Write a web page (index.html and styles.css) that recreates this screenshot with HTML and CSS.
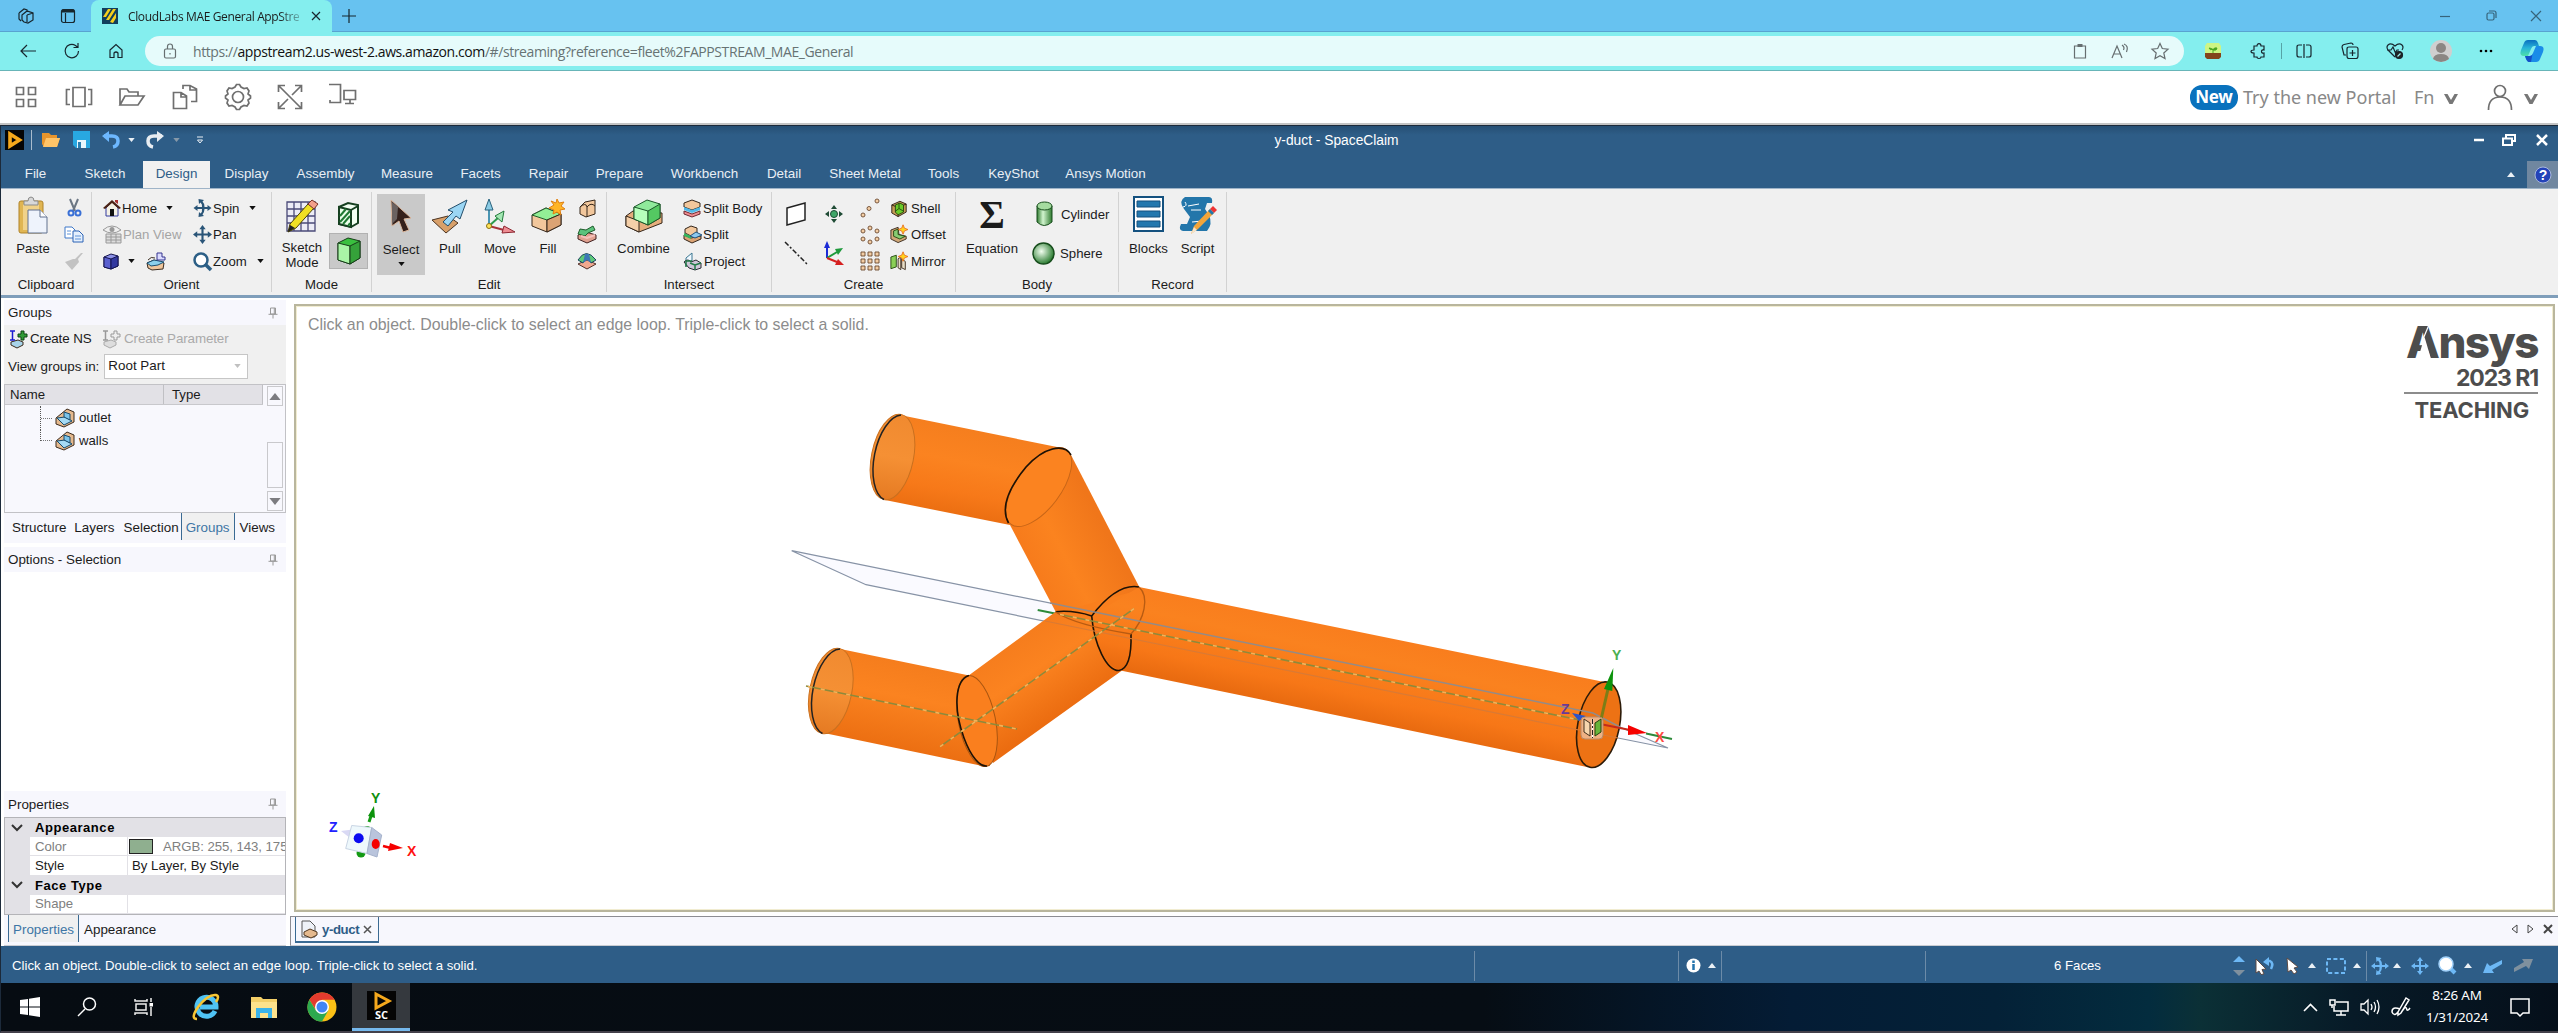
FILE: index.html
```html
<!DOCTYPE html>
<html lang="en">
<head>
<meta charset="utf-8">
<title>CloudLabs MAE General AppStream</title>
<link rel="stylesheet" href="styles.css">
</head>
<body>
<svg class="defs" aria-hidden="true">
  <defs>
    <symbol id="down" viewBox="0 0 8 5"><path d="M0 0H8L4 5Z" fill="currentColor"/></symbol>
    <symbol id="up" viewBox="0 0 8 5"><path d="M0 5H8L4 0Z" fill="currentColor"/></symbol>
    <symbol id="chev" viewBox="0 0 16 12"><path d="M1 1H4.500L8 7L11.500 1H15L9.500 11H6.500Z" fill="#777"/></symbol>
    <symbol id="pin" viewBox="0 0 10 12"><path d="M2.500 1H7.500V7H2.500ZM6.300 1V7M0.500 7.300H9.500M5 7.500V11.500" fill="none" stroke="#999" stroke-width="1"/></symbol>
    <symbol id="pan" viewBox="0 0 18 18"><path d="M9 0L12 4H10V8H14V6L18 9L14 12V10H10V14H12L9 18L6 14H8V10H4V12L0 9L4 6V8H8V4H6Z" fill="currentColor"/></symbol>
    <symbol id="spin" viewBox="0 0 18 18"><path d="M0 9L4 6V8H8.500Q9 5 7 3.500L5.500 5L5 0L10.500 1L9 2.500Q11.500 5 11 8H14V6L18 9L14 12V10H11Q11 13 9 15.500L10.500 17L5 18L5.500 13L7 14.500Q9 13 8.500 10H4V12Z" fill="currentColor"/></symbol>
    <symbol id="face" viewBox="0 0 20 20"><path d="M1 10L12 1L19 4V14L9 19L1 16Z" fill="#e5b98e" stroke="#3b2a1c"/><path d="M2 10L10 9L17 13L9 17Z" fill="#a5daf4" stroke="#174a6b"/><path d="M9 4L15 6V12L9 9Z" fill="#7cc4ea" stroke="#174a6b"/></symbol>
    <symbol id="spark" viewBox="0 0 10 10"><path d="M5 0L6.300 3.500L10 5L6.300 6.500L5 10L3.700 6.500L0 5L3.700 3.500Z" fill="#ffd21e" stroke="#e8641b" stroke-width=".8"/></symbol>
    <symbol id="box" viewBox="0 0 20 20"><path d="M2 6L11 2L18 5V14L9 19L2 15Z" fill="currentColor"/><path d="M2 6L9 9V19M9 9L18 5" fill="none" stroke="#2b1c12"/><path d="M2 6L11 2L18 5V14L9 19L2 15Z" fill="none" stroke="#2b1c12"/></symbol>
    <linearGradient id="main" gradientUnits="userSpaceOnUse" x1="1381" y1="634" x2="1363" y2="719"><stop offset="0" stop-color="#f97d1d"/><stop offset=".3" stop-color="#fa821f"/><stop offset=".75" stop-color="#f77717"/><stop offset="1" stop-color="#e96b10"/></linearGradient>
    <linearGradient id="tubeA" gradientUnits="userSpaceOnUse" x1="984" y1="431" x2="967" y2="516"><stop offset="0" stop-color="#f57e1e"/><stop offset=".4" stop-color="#fb8320"/><stop offset=".75" stop-color="#f77919"/><stop offset="1" stop-color="#ec6f12"/></linearGradient>
    <linearGradient id="tubeB" gradientUnits="userSpaceOnUse" x1="1028" y1="570" x2="1105" y2="530"><stop offset="0" stop-color="#f67a1b"/><stop offset=".45" stop-color="#fb831f"/><stop offset="1" stop-color="#f0761a"/></linearGradient>
    <linearGradient id="tubeC" gradientUnits="userSpaceOnUse" x1="1010" y1="645" x2="1057" y2="717"><stop offset="0" stop-color="#f67d1d"/><stop offset=".4" stop-color="#fb8320"/><stop offset="1" stop-color="#eb6c10"/></linearGradient>
    <linearGradient id="tubeD" gradientUnits="userSpaceOnUse" x1="905" y1="662" x2="888" y2="746"><stop offset="0" stop-color="#f57d1d"/><stop offset=".4" stop-color="#fb8320"/><stop offset="1" stop-color="#ec6f12"/></linearGradient>
    <linearGradient id="endcap" x1="0" y1="0" x2="0" y2="1"><stop offset="0" stop-color="#f08a30"/><stop offset=".5" stop-color="#f59034"/><stop offset="1" stop-color="#e57a22"/></linearGradient>
    <linearGradient id="cyl" x1="0" x2="1"><stop offset="0" stop-color="#2f7a2f"/><stop offset=".4" stop-color="#d2f5cf"/><stop offset="1" stop-color="#2f7a2f"/></linearGradient>
    <radialGradient id="sph" cx=".4" cy=".4" r=".6"><stop offset="0" stop-color="#f2fff0"/><stop offset="1" stop-color="#2f7f35"/></radialGradient>
    <linearGradient id="cop" x1="0" y1="0" x2="0" y2="1"><stop offset="0" stop-color="#0a6fc0"/><stop offset=".5" stop-color="#27b4d8"/><stop offset="1" stop-color="#4fe0a8"/></linearGradient>
  </defs>
</svg>

<header class="tabstrip">
  <div class="cell w44"><svg width="18" height="18" viewBox="0 0 18 18" class="ln"><path d="M2 6L7 2L10 3V5M5 8L10 4L16 6V13L11 16L7 15L5 13ZM2 6V12L4 14M10 8V15M10 8L16 6"/></svg></div>
  <div class="cell w40"><svg width="16" height="16" viewBox="0 0 16 16" class="ln"><rect x="1.500" y="1.500" width="13" height="13" rx="2"/><path d="M2 3H14" stroke-width="3"/><path d="M5.500 5V14"/></svg></div>
  <div class="btab">
    <svg width="16" height="16" viewBox="0 0 16 16"><path d="M0 0H16V16H0Z" fill="#123f5c"/><path d="M1 9L6 1H9L4 9ZM4 12L11 1H14L7 12ZM8 14L14 5V10L11 15Z" fill="#f6cf1b"/></svg>
    <span class="btitle">CloudLabs MAE General AppStre</span>
    <svg width="10" height="10" viewBox="0 0 10 10" class="ln"><path d="M1 1L9 9M9 1L1 9"/></svg>
  </div>
  <div class="cell w34"><svg width="14" height="14" viewBox="0 0 14 14" class="ln"><path d="M7 0V14M0 7H14"/></svg></div>
  <div class="grow"></div>
  <div class="cell w46 dim"><svg width="12" height="12" viewBox="0 0 12 12" class="ln"><path d="M1 6.500H11"/></svg></div>
  <div class="cell w46 dim"><svg width="11" height="11" viewBox="0 0 11 11" class="ln"><rect x="1" y="3" width="7" height="7" rx="1.500"/><path d="M3 1H8Q10 1 10 3V8"/></svg></div>
  <div class="cell w44 dim"><svg width="12" height="12" viewBox="0 0 12 12" class="ln"><path d="M1 1L11 11M11 1L1 11"/></svg></div>
</header>

<nav class="address">
  <div class="cell w44"><svg width="18" height="16" viewBox="0 0 18 16" class="ln"><path d="M17 8H2M8 2L2 8L8 14"/></svg></div>
  <div class="cell w44"><svg width="18" height="18" viewBox="0 0 18 18" class="ln"><path d="M15.500 9A6.700 6.700 0 1 1 12.500 3.500L15 5.500M15 1V5.500H10.500"/></svg></div>
  <div class="cell w44"><svg width="16" height="16" viewBox="0 0 16 16" class="ln"><path d="M2 7L8 1.500L14 7V14.500H10V10Q8 8 6 10V14.500H2Z"/></svg></div>
  <div class="urlbar">
    <svg width="14" height="16" viewBox="0 0 14 16" class="ln soft"><rect x="1.500" y="6" width="11" height="9" rx="1.500"/><path d="M4.500 6V3.500Q4.500 1 7 1Q9.500 1 9.500 3.500V6M7 10V11.500"/></svg>
    <span class="url">https://<b>appstream2.us-west-2.aws.amazon.com</b>/#/streaming?reference=fleet%2FAPPSTREAM_MAE_General</span>
    <div class="cell w40"><svg width="14" height="16" viewBox="0 0 14 16" class="ln soft"><path d="M1.500 3H12.500V15H1.500Z"/><path d="M4.500 2.500H9.500" stroke-width="3"/></svg></div>
    <div class="cell w40"><svg width="18" height="16" viewBox="0 0 18 16" class="ln soft"><path d="M1 15L6 3L11 15M3 11H9M11 2Q14 4 12.500 7M13 1Q18 3 15.500 9"/></svg></div>
    <div class="cell w40"><svg width="18" height="18" viewBox="0 0 18 18" class="ln soft"><path d="M9 1.500L11.300 6.500L17 7.200L12.800 11L14 16.500L9 13.700L4 16.500L5.200 11L1 7.200L6.700 6.500Z"/></svg></div>
  </div>
  <div class="cell ext"><svg width="16" height="16" viewBox="0 0 16 16"><path d="M2 0H14L16 3V11H0V3Z" fill="#cdf584"/><path d="M0 10H16V14L14 16H2L0 14Z" fill="#83441b"/><path d="M8 10V6Q5 8 4 5Q7 5 8 7Q9 4 12 5Q12 8 8 7" fill="#4aa720" stroke="#4aa720"/></svg></div>
  <div class="cell ext"><svg width="16" height="16" viewBox="0 0 16 16" class="ln"><path d="M4 3H7Q7 .7 9 .7Q11 .7 11 3H14V7Q11.500 6.500 11.500 8.500Q11.500 10.500 14 10V14H11Q11 15.500 9 15.500Q7 15.500 7 14H4V10Q1 10 1 8.500Q1 7 4 7Z"/></svg></div>
  <div class="vline"></div>
  <div class="cell ext"><svg width="16" height="16" viewBox="0 0 16 16" class="ln"><path d="M6 2H3Q1 2 1 4V12Q1 14 3 14H6M10 2H13Q15 2 15 4V12Q15 14 13 14H10M8 1V15"/></svg></div>
  <div class="cell ext"><svg width="18" height="18" viewBox="0 0 18 18" class="ln"><path d="M5 13L3 13L1 5Q1 3 3 2.500L10 1Q12 1 12 3M8 5H15Q17 5 17 7V14Q17 16.500 15 16.500H8Q6 16.500 6 14V7Q6 5 8 5ZM11.500 8V14M8.500 11H14.500"/></svg></div>
  <div class="cell ext"><svg width="18" height="18" viewBox="0 0 18 18" class="ln"><path d="M9 15L2 8Q0 5 2 3Q5 .5 9 4Q13 .5 16 3Q18 5 16 8M1 8H5L7 5L9.500 11L11 8H13"/><circle cx="13" cy="13" r="3.500" fill="#222"/><path d="M11.500 14.500L14.500 11.500" stroke="#9ee"/></svg></div>
  <div class="cell ext"><svg width="22" height="22" viewBox="0 0 22 22"><circle cx="11" cy="11" r="11" fill="#cfcfcf"/><circle cx="11" cy="8" r="5" fill="#8b8683"/><path d="M3 19Q4 14 11 14Q18 14 19 19Q11 25 3 19" fill="#8b8683"/></svg></div>
  <div class="cell ext"><svg width="14" height="4" viewBox="0 0 14 4"><circle cx="2" cy="2" r="1.300"/><circle cx="7" cy="2" r="1.300"/><circle cx="12" cy="2" r="1.300"/></svg></div>
  <div class="cell ext"><svg width="24" height="22" viewBox="0 0 24 22"><path d="M8 0H15Q17 0 18 3L19 6H14Q12 6 11 9L8 16H4Q-1 16 1 10L4 3Q5 0 8 0Z" fill="url(#cop)"/><path d="M16 22H9Q7 22 6 19L5 16H10Q12 16 13 13L16 6H20Q25 6 23 12L20 19Q19 22 16 22Z" fill="#1a8ce8"/><path d="M5 16H10Q12 16 12.500 14L11 22H9Q7 22 5 16" fill="#1450c8"/></svg></div>
</nav>

<div class="portal">
  <div class="tools">
    <svg width="22" height="22" viewBox="0 0 22 22" class="gl"><path d="M1.500 1.500H8.500V8.500H1.500ZM13.500 1.500H20.500V8.500H13.500ZM1.500 13.500H8.500V20.500H1.500ZM13.500 13.500H20.500V20.500H13.500Z"/></svg>
    <svg width="28" height="22" viewBox="0 0 28 22" class="gl"><path d="M8 1.500H20V20.500H8ZM5 3.500H1.500V18.500H5M23 3.500H26.500V18.500H23"/></svg>
    <svg width="28" height="20" viewBox="0 0 28 20" class="gl"><path d="M2 18V2H9L11 5H20V9M2 18L7 9H26L20 18Z"/></svg>
    <svg width="26" height="26" viewBox="0 0 26 26" class="gl"><path d="M1.500 8.500H9L14.500 12V24.500H1.500ZM9 9V13H14M11 5V1.500H18L24.500 5V17.500H19M18 2V6H24"/></svg>
    <svg width="28" height="28" viewBox="0 0 28 28" class="gl"><circle cx="14" cy="14" r="5.500"/><path d="M11 4L12.500 1.500H15.500L17 4L20 5.500L23 5L25 8L24 11L26.500 13V15L24 17L25 20L23 23L20 22.500L17 24L15.500 26.500H12.500L11 24L8 22.500L5 23L3 20L4 17L1.500 15V13L4 11L3 8L5 5L8 5.500Z"/></svg>
    <svg width="26" height="26" viewBox="0 0 26 26" class="gl"><path d="M1.500 8V1.500H8M18 1.500H24.500V8M24.500 18V24.500H18M8 24.500H1.500V18M2 2L24 24M24 2L15 11M11 15L2 24"/></svg>
    <svg width="28" height="22" viewBox="0 0 28 22" class="gl"><path d="M0 -1.500H11.500V16.500H1V14M15 4.500H26.500V13.500H15ZM21 14V17M16 17.500H25"/></svg>
  </div>
  <div class="account">
    <span class="new">New</span><span class="try">Try the new Portal</span><span class="fn">Fn</span>
    <svg class="cv" width="16" height="12"><use href="#chev"/></svg>
    <svg class="person" width="26" height="26" viewBox="0 0 26 26"><circle cx="13" cy="7" r="5.500"/><path d="M1.500 26Q1.500 13 13 13Q24.500 13 24.500 26"/></svg>
    <svg class="cv" width="16" height="12"><use href="#chev"/></svg>
  </div>
</div>

<main class="app">
  <div class="titlebar">
    <div class="quick">
      <svg width="19" height="20" viewBox="0 0 19 20"><path d="M0 0H19V20H0Z" fill="#050505"/><path d="M5 4L14.500 10L5 16Z" fill="none" stroke="#f5a81c" stroke-width="3.600"/></svg>
      <i class="qs"></i>
      <svg width="18" height="17" viewBox="0 0 18 17"><path d="M0 2H7L9 4H15V7H18L15 16H2L0 13Z" fill="#e8952c"/><path d="M4 7H18L15 16H1Z" fill="#ffc468"/></svg>
      <svg width="17" height="17" viewBox="0 0 17 17"><path d="M0 0H17V17H3L0 14Z" fill="#28a8e2"/><path d="M4 9H13V17H4Z" fill="#e8f6fd"/><path d="M5 11H8V17H5Z" fill="#2a7eb0"/></svg>
      <svg width="18" height="17" viewBox="0 0 18 17"><path d="M2 5H10Q16 5 16 10Q16 15 11 16" fill="none" stroke="#6db8ff" stroke-width="3.500"/><path d="M0 5L7 0V11Z" fill="#6db8ff"/></svg>
      <svg class="wt" width="7" height="4"><use href="#down"/></svg>
      <svg width="18" height="17" viewBox="0 0 18 17"><path d="M16 5H8Q2 5 2 10Q2 15 7 16" fill="none" stroke="#e8edf2" stroke-width="3.500"/><path d="M18 5L11 0V11Z" fill="#e8edf2"/></svg>
      <svg class="gt" width="7" height="4"><use href="#down"/></svg>
      <svg class="wt" width="8" height="8" viewBox="0 0 8 8"><path d="M1 1H7M1.500 4H6.500L4 7Z" fill="none" stroke="currentColor"/></svg>
    </div>
    <span class="ttext">y-duct - SpaceClaim</span>
    <div class="wctl">
      <svg width="12" height="12" viewBox="0 0 12 12"><path d="M1 6H11" stroke="#fff" stroke-width="2.500"/></svg>
      <svg width="14" height="12" viewBox="0 0 14 12"><path d="M4 4V1H13V7H10M1 4.500H10V11H1Z" fill="none" stroke="#fff" stroke-width="2"/></svg>
      <svg width="12" height="12" viewBox="0 0 12 12"><path d="M1 1L11 11M11 1L1 11" stroke="#fff" stroke-width="2.500"/></svg>
    </div>
  </div>

  <div class="rtabs">
    <span class="c1">File</span><span class="c2">Sketch</span><span class="c3 on">Design</span><span class="c4">Display</span><span class="c5">Assembly</span><span class="c6">Measure</span><span class="c7">Facets</span><span class="c8">Repair</span><span class="c9">Prepare</span><span class="c10">Workbench</span><span class="c11">Detail</span><span class="c12">Sheet Metal</span><span class="c13">Tools</span><span class="c14">KeyShot</span><span class="c15">Ansys Motion</span>
    <div class="help"><svg class="wt" width="8" height="5"><use href="#up"/></svg><span><svg width="18" height="18" viewBox="0 0 18 18"><circle cx="9" cy="9" r="8" fill="#2443b8" stroke="#a9b8dc"/><text x="9" y="14" text-anchor="middle">?</text></svg></span></div>
  </div>

  <div class="ribbon">
    <section class="g clip">
      <div class="body">
        <div class="big"><svg width="30" height="38" viewBox="0 0 30 38"><rect x="1" y="5" width="24" height="32" rx="2" fill="#e0b552" stroke="#b08328"/><rect x="5" y="8" width="16" height="26" fill="#f1d289"/><path d="M6 9V5H10Q10 1 13 1Q16 1 16 5H20V9Z" fill="#d8d8d8" stroke="#8b8b8b"/><path d="M10 14H22L29 21V37H10Z" fill="#eef3fc" stroke="#61708f"/><path d="M22 14V21H29" fill="#fff" stroke="#61708f"/></svg><span>Paste</span></div>
        <div class="col3">
          <svg width="14" height="18" viewBox="0 0 14 18"><path d="M3 0L8 12M11 0L6 12" stroke="#6b7684" stroke-width="2"/><circle cx="4" cy="14" r="2.500" fill="none" stroke="#3a70d6" stroke-width="2"/><circle cx="11" cy="14" r="2.500" fill="none" stroke="#3a70d6" stroke-width="2"/></svg>
          <svg width="20" height="17" viewBox="0 0 20 17"><path d="M1 1H8L11 4V12H1Z" fill="#fff" stroke="#3f79c9"/><path d="M9 5H15L19 9V16H9Z" fill="#e5f0fd" stroke="#2b62b5"/><path d="M3 5H7M3 8H7M11 10H17M11 13H17" stroke="#5e93d8"/></svg>
          <svg width="20" height="17" viewBox="0 0 20 17"><path d="M19 0L14 6L15 9L8 17L1 9L9 6L11 6L17 0Z" fill="#c2c2c2"/></svg>
        </div>
      </div><h4>Clipboard</h4></section>
    <section class="g orient">
      <div class="body">
        <div class="rows o1">
          <div><svg width="18" height="18" viewBox="0 0 18 18"><path d="M3 9V17H15V9L9 3Z" fill="#f4f1e5" stroke="#333aa0"/><path d="M0 9L9 1L18 9L16 10L9 4L2 10Z" fill="#4b2315"/><path d="M12 1H15V5L12 3Z" fill="#a33"/><path d="M7 10H11V17H7Z" fill="#111"/></svg><span>Home</span><svg class="ar" width="7" height="4"><use href="#down"/></svg></div>
          <div class="off"><svg width="19" height="19" viewBox="0 0 19 19"><path d="M0 5Q9 -3 18 5Q9 11 0 5Z" fill="#f0f0f0" stroke="#999"/><circle cx="9" cy="4.500" r="2.500" fill="#999"/><path d="M3 9H18V18H3ZM3 12H18M3 15H18M8 9V18M13 9V18" fill="#ddd" stroke="#999"/></svg><span>Plan View</span></div>
          <div><svg width="16" height="17" viewBox="0 0 16 17"><path d="M1 4L8 1L15 3V13L8 16L1 14Z" fill="#8d92e8" stroke="#15154f"/><path d="M1 4L8 6V16L1 14Z" fill="#5a60cf" stroke="#15154f"/><path d="M8 6L15 3V13L8 16Z" fill="#3339a0" stroke="#15154f"/></svg><svg class="ar" width="7" height="4"><use href="#down"/></svg><svg width="20" height="19" viewBox="0 0 20 19"><path d="M1 11L8 8L18 11L17 17L6 18L2 16Z" fill="#f0c69c" stroke="#3a2c20"/><path d="M1 11L8 8L18 10L12 13L5 14Z" fill="#8bd0ec" stroke="#1b4f70"/><path d="M2 8Q5 4 9 6" fill="none" stroke="#3a2c20"/><path d="M11 8V1H16V5H19V8Z" fill="#dcdcff" stroke="#34348f"/></svg></div>
        </div>
        <div class="rows o2">
          <div><svg class="nv" width="19" height="18"><use href="#spin"/></svg><span>Spin</span><svg class="ar" width="7" height="4"><use href="#down"/></svg></div>
          <div><svg class="nv" width="19" height="19"><use href="#pan"/></svg><span>Pan</span></div>
          <div><svg width="19" height="19" viewBox="0 0 19 19"><circle cx="8" cy="8" r="6.500" fill="#fff" stroke="#2c5f86" stroke-width="2.500"/><path d="M12 12L18 18" stroke="#2c5f86" stroke-width="3.500"/></svg><span>Zoom</span><svg class="ar" width="7" height="4"><use href="#down"/></svg></div>
        </div>
      </div><h4>Orient</h4></section>
    <section class="g mode">
      <div class="body">
        <div class="big"><svg width="34" height="34" viewBox="0 0 34 34"><path d="M2 3H30V32H2ZM2 10H30M2 17H30M2 24H30M9 3V32M16 3V32M23 3V32" fill="#ececf6" stroke="#4a4a78" stroke-width="1.300"/><path d="M3 33L5 25L23 5L29 9L11 29Z" fill="#f0e024" stroke="#4a4208"/><path d="M23 5L27 1L33 5L29 10Z" fill="#f4a08a" stroke="#7b3326"/><path d="M3 33L5 26L10 29Z" fill="#222"/></svg><span>Sketch<br>Mode</span></div>
        <div class="tg"><div><svg width="23" height="26" viewBox="0 0 23 26"><path d="M2 5L11 1L21 3V21L14 25L2 22Z" fill="#f2fff2" stroke="#163f20" stroke-width="2"/><path d="M2 5L14 8V25L2 22Z" fill="#eaffea" stroke="#163f20" stroke-width="2"/><path d="M3 14L9 7M3 20L13 9M6 22L13 14M11 24L13 21" stroke="#1f7a33" stroke-width="2"/><path d="M14 8L21 4" stroke="#163f20" stroke-width="2"/></svg></div><div class="dn"><svg width="24" height="28" viewBox="0 0 24 28"><path d="M1 6L11 1L23 4V21L13 27L1 23Z" fill="#3ac03f" stroke="#173d19"/><path d="M1 6L13 9V27L1 23Z" fill="#a9f5a6" stroke="#173d19"/><path d="M13 9L23 4V21L13 27Z" fill="#35a23a" stroke="#173d19"/></svg></div></div>
      </div><h4>Mode</h4></section>
    <section class="g edit">
      <div class="body">
        <div class="big sel"><svg width="22" height="34" viewBox="0 0 22 34"><path d="M1 1L21 19L14 20L19 31L13 33L9 22L2 27Z" fill="#35211c" stroke="#d8b49a"/><path d="M2 3L8 8L7 20L2 25Z" fill="#6b6260"/></svg><span>Select</span><svg class="ar" width="7" height="4"><use href="#down"/></svg></div>
        <div class="big b50"><svg width="36" height="34" viewBox="0 0 36 34"><path d="M0 21L16 17L26 24L14 34Z" fill="#d8a06a" stroke="#4b3320"/><path d="M35 1L28 20L24 17L16 27L11 23L21 13L16 11Z" fill="#9bd6f4" stroke="#234e6b"/></svg><span>Pull</span></div>
        <div class="big b50"><svg width="32" height="34" viewBox="0 0 32 34"><path d="M5 27V9" stroke="#4a95b3" stroke-width="2"/><path d="M5 0L9 11H1Z" fill="#8bcbe4" stroke="#28617c"/><path d="M5 27L15 18" stroke="#2c9a4d" stroke-width="2"/><path d="M20 12L18 23L11 17Z" fill="#a4e8b4" stroke="#237a3b"/><path d="M5 27L20 31" stroke="#a8323a" stroke-width="2"/><path d="M31 33L18 34L20 27Z" fill="#ee8c92" stroke="#8c2530"/><circle cx="5" cy="27" r="2.500" fill="#ffe35a" stroke="#8c7210"/></svg><span>Move</span></div>
        <div class="big b46"><svg width="34" height="34" viewBox="0 0 34 34"><path d="M1 16L15 9L30 15V26L16 33L1 27Z" fill="#f2c79c" stroke="#35261a"/><path d="M1 16L15 9L30 15L16 21Z" fill="#93ef96" stroke="#1f5c2b"/><path d="M16 21V33" stroke="#35261a"/><path d="M16 21L30 15V26L16 33Z" fill="#dba374" stroke="#35261a"/><path d="M26 0L28 4L33 3L30 7L34 10L29 11L30 16L26 13L22 15L23 11L18 9L23 6L20 2L25 4Z" fill="#ffb526" stroke="#e08010"/></svg><span>Fill</span></div>
        <div class="col3 e3">
          <svg width="18" height="19" viewBox="0 0 18 19"><path d="M2 8L7 3L17 1V15L8 18L2 15Z" fill="#f2c79c" stroke="#35261a"/><path d="M2 8Q8 3 9 8V18M9 8Q13 3 17 7" fill="none" stroke="#35261a"/></svg>
          <svg width="20" height="18" viewBox="0 0 20 18"><path d="M1 9L9 6L19 9V13L10 17L1 13Z" fill="#e0a08f" stroke="#402020"/><path d="M3 3L9 4L16 0L18 4L11 7L8 10L1 8Z" fill="#5cc27c" stroke="#1f5c2b"/><path d="M4 10L10 12L18 9" fill="none" stroke="#f7c0ba" stroke-width="2"/></svg>
          <svg width="20" height="18" viewBox="0 0 20 18"><path d="M1 12L10 8L19 12L10 17Z" fill="#f2a98f" stroke="#50302a"/><path d="M1 8Q9 -5 19 8L14 11Q10 3 6 11Z" fill="#5ec978" stroke="#1d4460"/><path d="M8 2L12 2L14 11L10 8L6 11Z" fill="#3c78b5"/></svg>
        </div>
      </div><h4>Edit</h4></section>
    <section class="g inter">
      <div class="body">
        <div class="big"><svg width="38" height="34" viewBox="0 0 38 34"><path d="M1 17L8 12L37 14V24L14 33L1 27Z" fill="#e5ae7d" stroke="#35261a"/><path d="M1 17L14 22V33L1 27Z" fill="#f4cfa8" stroke="#35261a"/><path d="M9 8L22 1L35 5V19L23 26L9 20Z" fill="#8fe99b" stroke="#1c5629"/><path d="M9 8L23 12V26L9 20Z" fill="#b6ffbb" stroke="#1c5629"/><path d="M23 12L35 5V19L23 26Z" fill="#54c862" stroke="#1c5629"/></svg><span>Combine</span></div>
        <div class="rows i2">
          <div><svg width="19" height="19" viewBox="0 0 19 19"><path d="M1 4L9 1L17 4V8L9 11L1 8Z" fill="#f2c79c" stroke="#35261a"/><path d="M1 8L9 11L17 8V11L9 14L1 11Z" fill="#50b9ea"/><path d="M1 12L9 15L17 12V15L9 18L1 15Z" fill="#f08c90" stroke="#6c2a33"/></svg><span>Split Body</span></div>
          <div><svg width="19" height="19" viewBox="0 0 19 19"><path d="M2 4L8 1L14 3V9L8 11L2 8Z" fill="#f2c79c" stroke="#35261a"/><path d="M1 10L8 13L18 11V14L9 18L1 14Z" fill="#dba374" stroke="#35261a"/><path d="M1 8L8 11L8 14L1 11Z" fill="#35b45c"/><path d="M7 11L13 7L19 10L12 13Z" fill="#8bc8ef" stroke="#24547c"/></svg><span>Split</span></div>
          <div><svg width="20" height="19" viewBox="0 0 20 19"><path d="M3 6L9 1V9L3 14Z" fill="#eef8ff" stroke="#3b7691"/><path d="M1 10Q5 6 8 10L13 8L18 11V16L12 18L6 16Z" fill="#cfc7d8" stroke="#2a2a33"/><path d="M7 11L12 13V18M12 13L18 11M3 15V9H9" fill="none" stroke="#227a47" stroke-width="1.500"/></svg><span>Project</span></div>
        </div>
      </div><h4>Intersect</h4></section>
    <section class="g create">
      <div class="body">
        <div class="rows2"><svg width="20" height="24" viewBox="0 0 20 24"><path d="M1 6L19 1V18L1 23Z" fill="#fff" stroke="#222" stroke-width="1.500"/></svg><svg width="24" height="24" viewBox="0 0 24 24"><path d="M1 1L23 23" stroke="#222" stroke-width="1.500" stroke-dasharray="5 2 2 2"/></svg></div>
        <div class="rows2"><svg width="18" height="18" viewBox="0 0 18 18"><path d="M9 0L12 4H6ZM9 18L12 14H6ZM0 9L4 6V12ZM18 9L14 6V12Z" fill="#1f4b35"/><circle cx="9" cy="9" r="3.500" fill="#3fa668" stroke="#1f4b35"/></svg><svg width="20" height="24" viewBox="0 0 20 24"><path d="M3 17V5" stroke="#1b2bd6" stroke-width="2"/><path d="M3 0L6 7H0Z" fill="#1b2bd6"/><path d="M3 17L13 11" stroke="#1e9a3c" stroke-width="2"/><path d="M19 7L14 14L11 8Z" fill="#1e9a3c"/><path d="M3 17L13 21" stroke="#d52020" stroke-width="2"/><path d="M20 24L11 24L14 18Z" fill="#d52020"/></svg></div>
        <div class="rows p">
          <svg width="20" height="20" viewBox="0 0 20 20" class="dt"><circle cx="3" cy="17" r="2"/><circle cx="9" cy="10.500" r="2"/><circle cx="17" cy="3" r="2"/></svg>
          <svg width="20" height="20" viewBox="0 0 20 20" class="dt"><circle cx="10" cy="3" r="2"/><circle cx="10" cy="17" r="2"/><circle cx="3" cy="6" r="2"/><circle cx="17" cy="6" r="2"/><circle cx="3" cy="14" r="2"/><circle cx="17" cy="14" r="2"/></svg>
          <svg width="20" height="20" viewBox="0 0 20 20" class="dt"><path d="M1 1H5V5H1ZM8 1H12V5H8ZM15 1H19V5H15ZM1 8H5V12H1ZM8 8H12V12H8ZM15 8H19V12H15ZM1 15H5V19H1ZM8 15H12V19H8ZM15 15H19V19H15Z"/></svg>
        </div>
        <div class="rows solid">
          <div><svg width="18" height="19" viewBox="0 0 20 20"><g color="#c49b55"><use href="#box"/></g><path d="M6 6L11 4L15 6V14L9 17L6 14Z" fill="#6bcb28" stroke="#24460e"/><path d="M6 13L10 10L15 13M10 10V4" fill="none" stroke="#24460e"/></svg><span>Shell</span></div>
          <div><svg width="18" height="19" viewBox="0 0 20 20"><path d="M1 5L9 2L10 10L18 12V15L9 19L1 15Z" fill="#d0a878" stroke="#35261a"/><path d="M4 6L9 4V10L17 12L11 15L4 12Z" fill="#87cc72" stroke="#24460e"/><svg x="9" y="-1" width="11" height="11" viewBox="0 0 10 10"><use href="#spark"/></svg></svg><span>Offset</span></div>
          <div><svg width="18" height="19" viewBox="0 0 20 20"><path d="M1 5L7 3V16L1 18Z" fill="#8ad057" stroke="#24460e"/><path d="M9 7L12 5V19L9 17ZM13 7L17 10V19L13 17Z" fill="#e7ddc7" stroke="#35261a"/><svg x="9" y="-1" width="11" height="11" viewBox="0 0 10 10"><use href="#spark"/></svg></svg><span>Mirror</span></div>
        </div>
      </div><h4>Create</h4></section>
    <section class="g bodyg">
      <div class="body">
        <div class="big"><b class="sigma">Σ</b><span>Equation</span></div>
        <div class="rows2 bb"><div><svg width="17" height="26" viewBox="0 0 17 26"><path d="M1 5V21Q8 28 16 21V5Z" fill="url(#cyl)" stroke="#174d1c"/><ellipse cx="8.500" cy="5" rx="7.500" ry="4" fill="#a5dba0" stroke="#174d1c"/></svg><span>Cylinder</span></div><div><svg width="23" height="23" viewBox="0 0 23 23"><circle cx="11.500" cy="11.500" r="10.500" fill="url(#sph)" stroke="#174d1c" stroke-width="1.500"/></svg><span>Sphere</span></div></div>
      </div><h4>Body</h4></section>
    <section class="g rec">
      <div class="body">
        <div class="big"><svg width="31" height="36" viewBox="0 0 31 36"><path d="M1 1H30V35H1Z" fill="#fff" stroke="#14517f" stroke-width="2"/><path d="M4 5H27V11H4ZM4 15H27V21H4ZM4 25H27V31H4Z" fill="#2478ae" stroke="#14517f"/></svg><span>Blocks</span></div>
        <div class="big"><svg width="38" height="38" viewBox="0 0 38 38"><path d="M6 1H30Q34 1 33 7H28L26 13L30 19Q34 28 28 35H4Q-1 34 2 28H8L11 21L5 13Q-1 5 6 1Z" fill="#2376aa"/><path d="M9 10L20 8M12 14H22M13 26L23 25M6 6Q9 10 4 11" fill="none" stroke="#fff"/><path d="M12 38L15 30L31 13L35 17L19 33Z" fill="#f2a53a"/><path d="M31 13L34 10L38 14L35 17Z" fill="#e33"/><path d="M29 15L31 13L35 17L33 19Z" fill="#27a"/><path d="M12 38L15 31L18 34Z" fill="#f5e4cb"/></svg><span>Script</span></div>
      </div><h4>Record</h4></section>
  </div>

  <div class="work">
    <aside class="side">
      <div class="ph"><span>Groups</span><svg width="10" height="12"><use href="#pin"/></svg></div>
      <div class="ptools">
        <div class="prow"><svg width="18" height="18" viewBox="0 0 18 18"><path d="M2 12L9 10L14 12V15L8 18L2 15Z" fill="#a8d4ea" stroke="#3b2a1c"/><path d="M1 1H6M3.500 1V10M1 10H6" stroke="#1b1bd0" stroke-width="1.500"/><path d="M12 1H15V4H18V7H15V10H12V7H9V4H12Z" fill="#2f9a35" stroke="#0d4412"/></svg><span class="n1">Create NS</span>
        <svg width="18" height="18" viewBox="0 0 18 18"><path d="M2 12L9 10L14 12V15L8 18L2 15Z" fill="#ddd" stroke="#aaa"/><path d="M1 1H6M3.500 1V10M1 10H6" stroke="#999" stroke-width="1.500"/><path d="M12 1H15V4H18V7H15V10H12V7H9V4H12Z" fill="#eee" stroke="#999"/></svg><span class="n2">Create Parameter</span></div>
        <div class="vrow"><span>View groups in:</span><div class="combo"><span>Root Part</span><svg class="lt" width="7" height="4"><use href="#down"/></svg></div></div>
      </div>
      <div class="tree">
        <div class="tmain">
          <div class="thead"><span>Name</span><span>Type</span></div>
          <div class="titem"><i></i><svg width="20" height="20"><use href="#face"/></svg><span>outlet</span></div>
          <div class="titem last"><i></i><svg width="20" height="20"><use href="#face"/></svg><span>walls</span></div>
        </div>
        <div class="sbar"><div class="sb"><svg width="12" height="7"><use href="#up"/></svg></div><div class="thumb"></div><div class="sb"><svg width="12" height="7"><use href="#down"/></svg></div></div>
      </div>
      <div class="ptabs"><span>Structure</span><span>Layers</span><span>Selection</span><span class="on">Groups</span><span>Views</span></div>
      <div class="ph op"><span>Options - Selection</span><svg width="10" height="12"><use href="#pin"/></svg></div>
      <div class="grow"></div>
      <div class="ph pr"><span>Properties</span><svg width="10" height="12"><use href="#pin"/></svg></div>
      <div class="pgrid">
        <div class="cat"><svg width="12" height="8" viewBox="0 0 12 8"><path d="M1 1L6 6L11 1" fill="none" stroke="#333" stroke-width="2"/></svg><b>Appearance</b></div>
        <div class="pr2 dimt"><span>Color</span><span class="argb"><i class="swatch"></i>ARGB: 255, 143, 175</span></div>
        <div class="pr2"><span>Style</span><span>By Layer, By Style</span></div>
        <div class="cat"><svg width="12" height="8" viewBox="0 0 12 8"><path d="M1 1L6 6L11 1" fill="none" stroke="#333" stroke-width="2"/></svg><b>Face Type</b></div>
        <div class="pr2 dimt"><span>Shape</span><span></span></div>
      </div>
      <div class="ptabs bot"><span class="on">Properties</span><span>Appearance</span></div>
    </aside>

    <div class="stage">
      <div class="view">
        <span class="hint">Click an object. Double-click to select an edge loop. Triple-click to select a solid.</span>
        <div class="logo"><div class="brand">Ansys<svg width="34" height="34" viewBox="0 0 34 34"><path d="M16.500 12L9.800 34.500H23.200Z" fill="#fff"/><path d="M20.500 1L15.500 13" stroke="#fff" stroke-width="1.200"/></svg></div><div class="ver">2023 R1</div><div class="teach">TEACHING</div></div>
        <svg class="scene" viewBox="296 306 2256 604" width="2256" height="604">
          <path d="M791.700 550.700L866 584.700L1618 738L1668 748L1620 727L1593 713Z" fill="#fafaff" stroke="#8793a6" stroke-width="1.200"/>
          <path d="M1037.700 610L1060 614.500M1646 733.500L1672 739" stroke="#2d8a3a" stroke-width="2"/>
          <path d="M900 415L1062 448L1071 455L1010 525L885 500Z" fill="url(#tubeA)"/>
          <ellipse cx="892.500" cy="457" rx="21" ry="43.500" transform="rotate(11.500 892.500 457)" fill="url(#endcap)" stroke="#c9701f"/>
          <path d="M901 415A21 43.500 11.500 0 0 884 499.500" fill="none" stroke="#222" stroke-width="1.500"/>
          <path d="M1062 448L1071 455L1139.300 587L1136 640L1091 640L1055.700 611.700L1010 525Z" fill="url(#tubeB)"/>
          <ellipse cx="1038.700" cy="487" rx="22" ry="46.500" transform="rotate(36.800 1038.700 487)" fill="#fb8320" stroke="#c76517"/>
          <path d="M1008.500 523C1001 509 1007 490 1026 467C1044 447 1064 443 1071 455" fill="none" stroke="#1d1206" stroke-width="1.600"/>
          <path d="M1060 612L1139 590L1160 650L1121.700 670L1085 690Z" fill="#f97f1d"/>
          <path d="M1139 587L1603 681.700L1587 767L1121.700 670.700C1105 668 1093 640 1091.700 616Z" fill="url(#main)"/>
          <path d="M1055.700 611.700L1091.700 616C1093 640 1105 668 1121.700 670.700L993 763L969.300 675Z" fill="url(#tubeC)"/>
          <path d="M838 648.500L969.300 675.500L990 766L985 766.500L824 733Z" fill="url(#tubeD)"/>
          <ellipse cx="830.800" cy="691" rx="21" ry="43.500" transform="rotate(11.500 830.800 691)" fill="url(#endcap)" stroke="#c9701f"/>
          <path d="M840 649A21 43.500 11.500 0 0 822.500 733.500" fill="none" stroke="#222" stroke-width="1.500"/>
          <ellipse cx="977" cy="721" rx="18.500" ry="46.300" transform="rotate(-11.500 977 721)" fill="#fa7f1e" stroke="#a95510"/>
          <path d="M969 675.500C955 680 953 708 964 738C971 757 980 767 987 766" fill="none" stroke="#1d1206" stroke-width="1.600"/>
          <path d="M1055.700 611.700Q1074 610 1091.700 616Q1117 583 1139 587M1091.700 616C1094 645 1107 671 1119 670.500Q1132 668 1131 634" fill="none" stroke="#1d1206" stroke-width="1.600"/>
          <path d="M1139 587C1150 597 1144 620 1131 634M1055.700 612Q1075 625 1131 634" fill="none" stroke="#b85b12" stroke-width="1.300"/>
          <ellipse cx="1598.700" cy="724.700" rx="20.800" ry="43.500" transform="rotate(11.500 1598.700 724.700)" fill="#ed7214" stroke="#2b1a08" stroke-width="1.600"/>
          <path d="M1050 603L1593 713L1620 727" fill="none" stroke="#948b87" stroke-width="1.500"/>
          <path d="M1045 621L1618 738" fill="none" stroke="#d97a35" stroke-width="1.200"/>
          <g fill="none" stroke-width="1.600"><path d="M1060 614.500L1580 720M1134 608.700L940 746.700M806 686L1017 729" stroke="#8c8a3c"/><path d="M1060 614.500L1580 720M1134 608.700L940 746.700M808 686.500L1017 729" stroke="#f8b057" stroke-dasharray="4 9"/></g>
          <path d="M1600 724L1608 689" stroke="#7d7d16" stroke-width="3"/><path d="M1613.300 668L1604 689L1612.300 691Z" fill="#0c930c"/>
          <path d="M1600 724L1630 730" stroke="#c52a1a" stroke-width="2"/><path d="M1628 725V735L1647 733Z" fill="#f50000"/>
          <path d="M1572 713L1586 716L1579 721Z" fill="#2c55c8"/>
          <rect x="1581" y="717" width="22" height="22" rx="4" fill="#eeb184" stroke="#b98a68"/><path d="M1584 719L1590 723V736L1584 732Z" fill="#f6d6ae" stroke="#43301e"/><path d="M1595 723L1601 719V732L1595 736Z" fill="#67b53a" stroke="#26420f"/><path d="M1592.500 719V738" stroke="#fff" stroke-width="1.500"/><path d="M1592.500 719V738" stroke="#222" stroke-dasharray="5 2 2 2"/>
          <g class="ax"><text x="1612" y="660" fill="#4caf50">Y</text><text x="1655" y="742" fill="#ff4a43">X</text><text x="1561" y="714" fill="#6a3a96">Z</text></g>
          <path d="M341 831L356 829L350 838Z" fill="#d9d9f4"/>
          <circle cx="367" cy="830" r="4" fill="#149a14"/><circle cx="361" cy="853" r="4.500" fill="#149a14"/>
          <path d="M369 822L371 816" stroke="#149a14" stroke-width="3"/><path d="M374 806L368 816L375 818Z" fill="#0c930c"/>
          <path d="M351.700 825.500L371.700 827.500L367 853.500L345.700 848.500Z" fill="#eef8fc" stroke="#c9d5e4"/><path d="M371.700 827.500L381.700 835L377 857L367 853.500Z" fill="#b9c4dc" stroke="#a5b2cc"/>
          <circle cx="358.700" cy="838.300" r="5" fill="#0a0af0"/><ellipse cx="375.700" cy="844" rx="4" ry="5" fill="#f50000"/>
          <path d="M383 846L391 848" stroke="#f50000" stroke-width="2.500"/><path d="M390 843L403 848L388 851Z" fill="#f50000"/>
          <g class="ax"><text x="371" y="803" fill="#0f900f">Y</text><text x="407" y="856" fill="#f11">X</text><text x="329" y="832" fill="#22f">Z</text></g>
        </svg>
      </div>
      <div class="docs"><div class="dtab"><svg width="17" height="19" viewBox="0 0 17 19"><path d="M1 1H9L14 6V17H1Z" fill="#eef1f8" stroke="#555"/><path d="M3 12L9 9L16 12V15L10 18L3 15Z" fill="#e5b98e" stroke="#513720"/></svg><b>y-duct</b><svg width="9" height="9" viewBox="0 0 9 9"><path d="M1 1L8 8M8 1L1 8" stroke="#555" stroke-width="1.500"/></svg></div>
        <div class="dnav"><svg width="7" height="10" viewBox="0 0 7 10"><path d="M6 1V9L1 5Z" fill="none" stroke="#444"/></svg><svg width="7" height="10" viewBox="0 0 7 10"><path d="M1 1V9L6 5Z" fill="none" stroke="#444"/></svg><svg width="10" height="10" viewBox="0 0 10 10"><path d="M1 1L9 9M9 1L1 9" stroke="#444" stroke-width="2"/></svg></div></div>
    </div>
  </div>

  <footer class="status">
    <span class="msg">Click an object. Double-click to select an edge loop. Triple-click to select a solid.</span>
    <span class="s1"></span>
    <span class="s2"><svg width="15" height="15" viewBox="0 0 15 15"><circle cx="7.500" cy="7.500" r="7" fill="#fff"/><path d="M7.500 6V12M7.500 2.500V5" stroke="#2474ad" stroke-width="2.500"/></svg><svg class="wt" width="8" height="5"><use href="#up"/></svg></span>
    <span class="s3"></span>
    <span class="s4"><span>6 Faces</span></span>
    <span class="s5">
      <svg width="12" height="20" viewBox="0 0 12 20"><path d="M0 6H12L6 0Z" fill="#6db8f5"/><path d="M0 14H12L6 20Z" fill="#7f909e"/></svg>
      <svg width="20" height="18" viewBox="0 0 20 18"><path d="M12 4H15Q19 6 16 12" fill="none" stroke="#6db8f5" stroke-width="2.500"/><path d="M8 5L14 0V9Z" fill="#6db8f5"/><path d="M1 2L11 12L7 12.500L9 17L6 17.500L4 14L1 16Z" fill="#fff" stroke="#5c4b45"/></svg>
      <svg width="14" height="17" viewBox="0 0 14 17"><path d="M1 1L12 10L8 11L11 15L8 17L5 13L2 15Z" fill="#fff" stroke="#5c4b45"/></svg>
      <svg class="wt" width="8" height="5"><use href="#up"/></svg>
      <svg width="20" height="16" viewBox="0 0 20 16"><rect x="1" y="1" width="18" height="14" fill="none" stroke="#6db8f5" stroke-width="2" stroke-dasharray="4 2.400"/></svg>
      <svg class="wt" width="8" height="5"><use href="#up"/></svg>
      <i></i>
      <svg class="lb" width="18" height="18"><use href="#spin"/></svg>
      <svg class="wt" width="8" height="5"><use href="#up"/></svg>
      <svg class="lb" width="18" height="18"><use href="#pan"/></svg>
      <svg width="19" height="19" viewBox="0 0 19 19"><path d="M12 12L17 17" stroke="#6db8f5" stroke-width="4"/><circle cx="8" cy="8" r="7" fill="#fff" stroke="#9fd0fa" stroke-width="1.500"/></svg>
      <svg class="wt" width="8" height="5"><use href="#up"/></svg>
      <svg width="20" height="14" viewBox="0 0 20 14"><path d="M0 14L4 4L7 7L19 1V5L9 11L11 14Z" fill="#6db8f5"/></svg>
      <svg width="20" height="14" viewBox="0 0 20 14"><path d="M20 0L16 10L13 7L1 13V9L11 3L9 0Z" fill="#7f909e"/></svg>
    </span>
  </footer>
</main>

<div class="taskbar">
  <div class="cell w58"><svg width="20" height="20" viewBox="0 0 20 20"><path d="M0 3L8 2V9.500H0ZM9 1.800L20 0V9.500H9ZM0 10.500H8V18L0 17ZM9 10.500H20V20L9 18.200Z" fill="#fff"/></svg></div>
  <div class="cell w56"><svg width="20" height="20" viewBox="0 0 20 20"><circle cx="12.500" cy="7" r="6" fill="none" stroke="#fff" stroke-width="1.500"/><path d="M8 12L1 19" stroke="#fff" stroke-width="1.500"/></svg></div>
  <div class="cell w58"><svg width="20" height="18" viewBox="0 0 20 18"><path d="M1 1V3H13V1M2 6H12V12H2ZM1 17V15H13V17M17 0V4M17 9V18" fill="none" stroke="#eee" stroke-width="1.500"/><path d="M15.500 5H19V8.500H15.500Z" fill="#fff"/></svg></div>
  <div class="cell w66"><svg width="28" height="28" viewBox="0 0 28 28"><path d="M23 18A9.500 9.500 0 1 1 24 14H8" fill="none" stroke="#4fc3f4" stroke-width="5"/><path d="M5 26Q-2 26 6 14Q16 1 24 2Q28 3 24 9" fill="none" stroke="#f7c634" stroke-width="2.500"/></svg></div>
  <div class="cell w50"><svg width="26" height="22" viewBox="0 0 26 22"><path d="M0 1H10L12 3H26V22H0Z" fill="#f3cf68"/><path d="M0 6H26V22H0Z" fill="#fde28c"/><path d="M5 22V12H21V22H17V17H9V22Z" fill="#3bb3ea"/></svg></div>
  <div class="cell w66"><svg width="30" height="30" viewBox="0 0 30 30"><circle cx="15" cy="15" r="14.500" fill="#fbc116"/><path d="M2.400 7.700A14.500 14.500 0 0 1 27.600 7.700H15L9 18Z" fill="#e33b2e"/><path d="M2.400 7.700A14.500 14.500 0 0 0 15 29.500L21.300 18.500L9 18.500Z" fill="#2da94f"/><circle cx="15" cy="15" r="7" fill="#fff"/><circle cx="15" cy="15" r="5.500" fill="#4285f4"/></svg></div>
  <div class="cell run"><svg width="29" height="29" viewBox="0 0 29 29"><path d="M0 0H29V29H0Z" fill="#050505"/><path d="M9 3L22 10L9 17Z" fill="none" stroke="#f5a81c" stroke-width="3"/><text x="14.500" y="27.500" text-anchor="middle">SC</text></svg></div>
  <div class="tray">
    <svg width="15" height="9" viewBox="0 0 15 9"><path d="M1 8L7.500 1.500L14 8" fill="none" stroke="#fff" stroke-width="1.600"/></svg>
    <svg width="20" height="17" viewBox="0 0 20 17"><path d="M7 3H19V12H5V7M1 1H6V6H1ZM3 6V9M12 12V16M7 16H17" fill="none" stroke="#fff" stroke-width="1.500"/></svg>
    <svg width="20" height="16" viewBox="0 0 20 16"><path d="M1 5H4L8 1V15L4 11H1ZM11 5Q13 8 11 11M14 3Q17 8 14 13M17 1Q21 8 17 15" fill="none" stroke="#fff" stroke-width="1.300"/></svg>
    <svg width="20" height="20" viewBox="0 0 20 20"><path d="M7 15L15 1L18 3L10 16L7 18ZM9 12Q1 9 1 15Q3 20 7 15M12 13Q15 8 16 13Q17 14 19 11" fill="none" stroke="#fff" stroke-width="1.500"/></svg>
    <div class="clock"><span>8:26 AM</span><span>1/31/2024</span></div>
    <svg width="20" height="19" viewBox="0 0 20 19"><path d="M1 1H19V15H13L10 18L7 15H1Z" fill="none" stroke="#fff" stroke-width="1.500"/></svg>
  </div>
</div>
</body>
</html>
```
FILE: styles.css
```css
* { box-sizing: border-box; }
body { margin: 0; width: 2558px; height: 1033px; overflow: hidden; display: flex; flex-direction: column; background: #fff; font-family: "Liberation Sans", Arial, sans-serif; font-size: 13.2px; line-height: 15px; color: #1b1b1b; white-space: nowrap; }
svg { display: block; flex: none; overflow: visible; }
.defs { position: absolute; width: 0; height: 0; }
.cell { display: flex; align-items: center; justify-content: center; flex: none; }
.grow { flex: 1; }
.w34 { width: 34px; } .w40 { width: 40px; } .w44 { width: 44px; } .w46 { width: 46px; }
.w50 { width: 50px; } .w56 { width: 56px; } .w58 { width: 58px; } .w66 { width: 66px; }
.ln { fill: none; stroke: #17262e; stroke-width: 1.2; }
.ln.soft { stroke: #666e70; }
.dim { opacity: .6; }
.wt { color: #eaf0f5; } .gt { color: #8799a9; } .lt { color: #c0c0c0; } .ar { color: #111; } .nv { color: #2a5578; } .lb { color: #6db8f5; }

/* browser chrome */
.tabstrip { flex: none; height: 32px; display: flex; padding-left: 4px; background: #67c2f0; border-bottom: 1px solid #59a3d0; font-family: "Open Sans", "Noto Sans", sans-serif; }
.btab { width: 241px; height: 32px; margin-left: 3px; padding: 0 11px; display: flex; align-items: center; background: #84eeee; border-radius: 8px 8px 0 0; font-size: 12px; }
.btitle { width: 173px; margin: 0 12px 0 10px; letter-spacing: -.36px; -webkit-mask-image: linear-gradient(90deg, #000 88%, rgba(0,0,0,.3)); mask-image: linear-gradient(90deg, #000 88%, rgba(0,0,0,.3)); }
.address { flex: none; height: 39px; padding-left: 6px; display: flex; align-items: center; background: #84eeee; border-bottom: 1px solid #68b5b8; }
.urlbar { width: 2039px; height: 30px; margin: 0 6px 0 7px; padding: 0 4px 0 18px; display: flex; align-items: center; border-radius: 15px; background: #e6fbfb; }
.url { flex: 1; margin-left: 16px; font: 14px "Open Sans", "Noto Sans", sans-serif; letter-spacing: -.41px; color: #677374; }
.url b { font-weight: 400; color: #111; }
.ext { width: 45.6px; }
.vline { width: 1px; height: 16px; background: #56a3a6; margin: 0 -1px 0 0; }
.portal { flex: none; height: 54px; display: flex; justify-content: space-between; align-items: center; background: #fff; border-bottom: 2px solid #c4c4c4; }
.tools { display: grid; grid-template-columns: repeat(7, 52.8px); justify-items: center; align-items: center; }
.gl, .person { fill: none; stroke: #6f6f6f; stroke-width: 1.7; }
.account { display: flex; align-items: center; padding-right: 19px; font-family: "Noto Sans", sans-serif; font-size: 18px; color: #888; }
.new { width: 48px; height: 25px; line-height: 24px; text-align: center; border-radius: 12px; background: #0972bd; color: #fff; font-weight: 700; font-size: 17px; letter-spacing: -.3px; margin-right: 5px; }
.try { width: 171px; } .fn { width: 29px; }
.cv { margin-top: 4px; }
.person { margin: 0 10px 0 28px; }

/* application frame */
.app { flex: none; height: 858px; display: flex; flex-direction: column; border-left: 1px solid #1c2a3a; border-top: 1px solid #1c2a3a; background: #fff; }
.titlebar { flex: none; height: 35px; display: flex; justify-content: space-between; padding: 0 10px 8px 4px; background: linear-gradient(#264f74, #2e5d87 9px); }
.quick { display: flex; align-items: center; }
.quick .qs { width: 1px; height: 20px; margin: 0 10px 0 7px; background: #a9bccd; }
.quick svg:nth-of-type(2) { margin-right: 13px; }
.quick svg:nth-of-type(3) { margin-right: 12px; }
.quick svg:nth-of-type(4) { margin-right: 8px; }
.quick svg:nth-of-type(5) { margin-right: 11px; }
.quick svg:nth-of-type(6) { margin-right: 9px; }
.quick svg:nth-of-type(7) { margin-right: 16px; }
.ttext { width: 127px; margin-right: 4px; align-self: center; color: #fff; text-align: center; padding-top: 2px; font-size: 13.8px; }
.wctl { display: flex; align-items: center; gap: 20px; }
.wctl svg:first-child { margin-right: -3px; }
.rtabs { flex: none; height: 28px; display: flex; background: #2e5d87; border-bottom: 1px solid #9fb4c8; color: #e9eff5; padding-left: 3px; font-size: 13.4px; }
.rtabs > span { text-align: center; line-height: 26px; }
.rtabs .on { background: #f1f1f1; color: #2e5d87; }
.c1 { width: 63px; } .c2 { width: 76px; } .c3 { width: 67px; } .c4 { width: 73px; } .c5 { width: 85px; } .c6 { width: 78px; } .c7 { width: 69px; } .c8 { width: 67px; } .c9 { width: 75px; } .c10 { width: 95px; } .c11 { width: 64px; } .c12 { width: 98px; } .c13 { width: 59px; } .c14 { width: 81px; } .c15 { width: 103px; }
.help { margin-left: auto; display: flex; align-items: center; gap: 12px; }
.help span { width: 31px; height: 27px; display: flex; align-items: center; justify-content: center; background: #7087a0; }
.help text { font: bold 14px "Liberation Sans", sans-serif; fill: #fff; }

/* ribbon */
.ribbon { flex: none; height: 109px; display: flex; background: #f0f0f0; border-bottom: 3px solid #7f9eba; padding-top: 3px; }
.g { flex: none; height: 100px; display: flex; flex-direction: column; border-right: 1px solid #d2d2d2; }
.g .body { height: 83px; display: flex; }
.g h4 { margin: 2px 0 0; font-weight: 400; font-size: 13.2px; text-align: center; }
.clip { width: 91px; } .orient { width: 180px; } .mode { width: 100px; } .edit { width: 235px; } .inter { width: 165px; } .create { width: 184px; } .bodyg { width: 163px; } .rec { width: 108px; }
.big { flex: none; display: flex; flex-direction: column; align-items: center; padding-top: 7px; }
.big > :first-child { margin-bottom: auto; }
.big > span:last-child { margin-bottom: 19px; }
.big > span { text-align: center; }
.clip .big { width: 64px; padding-top: 4px; }
.col3, .rows { flex: none; display: grid; grid-template-rows: 26px 27px 26px; margin-top: 3px; align-items: center; justify-items: center; align-content: start; }
.clip .col3 { margin-left: -1px; width: 18px; }
.rows > div { display: flex; align-items: center; justify-self: start; }
.rows > div > span { margin-left: 1px; }
.rows .ar { margin-left: 9px; }
.o1 { width: 90px; margin-left: 11px; } .o2 .ar { margin-left: 10px; }
.o1 .ar + svg { margin-left: 11px; }
.o1 .off { color: #a4a4a4; }
.mode .big { width: 56px; margin-left: 2px; }
.mode .big > span:last-child { margin-bottom: 5px; }
.tg { flex: none; width: 39px; margin-left: -1px; }
.tg div { height: 37px; display: flex; align-items: center; justify-content: center; margin-top: 4px; }
.tg .dn { height: 36px; margin-top: 0; background: #c9c9c9; border: 1px solid #b2b2b2; }
.sel { width: 48px; height: 81px; margin: 2px 0 0 5px; padding-top: 5px; background: #c9c9c9; }
.sel > .ar { margin: 5px 0 9px; }
.edit .b50 { width: 50px; } .edit .b46 { width: 46px; }
.e3 { margin-left: 6px; }
.inter .big { width: 73px; }
.i2 { margin-left: 3px; }
.rows2 { flex: none; display: grid; grid-template-rows: 40px 38px; align-items: center; justify-items: center; margin-top: 2px; }
.create .rows2:first-child { margin-left: 11px; width: 26px; }
.create .rows2:nth-child(2) { margin-left: 12px; width: 26px; }
.create .p { margin-left: 13px; }
.dt { fill: #f3cda4; stroke: #6b4a30; stroke-width: .9; }
.solid { margin-left: 10px; }
.rows.solid > div > span { margin-left: 3px; }
.bodyg .big { width: 72px; }
.sigma { font: bold 39px/32px "Liberation Serif", serif; }
.bb { justify-items: start; margin-left: 4px; }
.bb div { display: flex; align-items: center; }
.bb div:first-child { padding-left: 4px; }
.bb span { margin-left: 5px; } .bb div:first-child span { margin-left: 8px; }
.rec .big { width: 49px; padding-top: 4px; }
.rec .big:first-child { margin-left: 5px; }

/* side panels */
.work { flex: none; height: 648px; display: flex; }
.side { flex: none; width: 285px; display: flex; flex-direction: column; padding: 2px 0 0 3px; }
.ph { flex: none; height: 25px; display: flex; align-items: center; justify-content: space-between; padding: 0 8px 0 4px; background: #f7f7fd; font-size: 13.4px; }
.ptools { flex: none; height: 59px; padding: 3px 0 0 5px; background: #f0f0f0; font-size: 13.4px; }
.prow, .vrow { display: flex; align-items: center; height: 21px; }
.n1 { width: 62px; margin: 0 10px 0 3px; letter-spacing: -.1px; } .n2 { margin-left: 4px; color: #aaa; letter-spacing: -.12px; }
.vrow { height: 25px; margin: 5px 0 0 -1px; }
.combo { width: 144px; height: 25px; margin-left: 5px; padding: 0 6px 2px 3px; display: flex; align-items: center; justify-content: space-between; background: #fff; border: 1px solid #c6c6c6; }
.tree { flex: none; height: 129px; display: flex; border: 1px solid #c2c2c6; background: #f8f8fd; }
.tmain { width: 258px; }
.thead { height: 20px; display: flex; background: #e2e1e6; border-bottom: 1px solid #c8c8cc; line-height: 20px; }
.thead span { padding-left: 5px; width: 159px; border-right: 1px solid #c0c0c4; }
.thead span + span { width: 99px; padding-left: 8px; }
.titem { height: 23px; padding-left: 35px; display: flex; align-items: center; }
.titem:nth-child(2) { height: 24px; padding-top: 1px; }
.titem i { width: 12px; height: 24px; margin-right: 3px; border-left: 1px dotted #555; background: linear-gradient(90deg, #777 50%, transparent 50%) 0 12px / 2px 1px repeat-x; }
.titem.last i { height: 12px; margin-top: -12px; background-position: 0 11px; }
.titem span { margin-left: 4px; }
.sbar { flex: 1; padding: 1px 2px; display: flex; flex-direction: column; background: #f8f8fd; margin-left: 2px; }
.sb { height: 20px; border: 1px solid #c9c9cc; display: flex; align-items: center; justify-content: center; color: #7c7c80; }
.thumb { height: 46px; margin: auto 0 3px; border: 1px solid #c9c9cc; }
.ptabs { flex: none; height: 30px; display: flex; align-items: flex-start; background: #f7f7fd; padding-left: 8px; font-size: 13.4px; }
.ptabs span { height: 27px; line-height: 30px; margin-right: 8px; }
.ptabs span.on { background: #f0f0f0; color: #3e76a5; border: solid #3a6a93; border-width: 0 1px; padding: 0 4px; margin: 0 5px 0 -6px; }
.ptabs:not(.bot) span:nth-child(2) { margin-right: 9px; }
.op { margin-top: 4px; }
.pgrid { flex: none; height: 98px; border: 1px solid #b4b4b8; background: #e2e1e6; overflow: hidden; }
.cat { height: 19px; display: flex; align-items: center; padding-left: 6px; letter-spacing: .55px; color: #000; font-size: 13px; }
.cat b { margin-left: 12px; }
.pr2 { height: 19.4px; display: flex; background: #fff; margin-left: 25px; border-bottom: 1px solid #e2e1e6; line-height: 19px; }
.pr2 span { display: flex; align-items: center; padding-left: 4px; }
.pr2 span:first-child { width: 98px; flex: none; padding-left: 5px; border-right: 1px solid #e2e1e6; }
.pr2 .argb { letter-spacing: -.05px; }
.dimt { color: #808080; }
.swatch { width: 24px; height: 15px; margin: 0 10px 0 -3px; background: #8faf8f; border: 1px solid #222; flex: none; }
.pr { height: 26px; }
.bot { padding-left: 4px; height: 31px; border-bottom: 1px solid #c9ccd2; }
.bot span.on { margin: 0 5px 0 0; }

/* model view */
.stage { flex: 1; display: flex; flex-direction: column; padding-top: 6px; min-width: 0; }
.view { flex: none; position: relative; width: 2261px; height: 608px; margin-left: 8px; border: 2px solid #b9b69d; background: #fff; box-shadow: inset 0 0 0 1px #f1ecd0; }
.hint { position: absolute; left: 12px; top: 9px; font-size: 15.9px; line-height: 20px; color: #8c8c8c; }
.scene { position: absolute; left: 0; top: 0; }
.ax { font: bold 14px "Liberation Sans", sans-serif; }
.logo { position: absolute; right: 15px; top: 12px; width: 134px; color: #4d4d4d; font-family: Inter, "Open Sans", sans-serif; text-align: right; }
.brand { position: relative; font-size: 44px; font-weight: 800; line-height: 48px; letter-spacing: -1.5px; margin-left: -20px; }
.brand svg { position: absolute; left: 23.5px; top: 7px; }
.ver { font: 700 23px/25px Inter, sans-serif; letter-spacing: -1.1px; }
.teach { margin-top: 1px; padding: 4px 9px 0 0; border-top: 2px solid #8c8c8c; font: 700 22px/24px Inter, sans-serif; letter-spacing: -.15px; }
.docs { flex: none; height: 30px; margin: 4px 0 0 4px; display: flex; justify-content: space-between; background: #f7f7fd; border-top: 1px solid #8d8d93; border-left: 1px solid #8d8d93; border-bottom: 1px solid #c9ccd2; }
.dtab { width: 84px; height: 26px; margin-left: 4px; display: flex; align-items: center; padding-left: 5px; border: solid #3a6a93; border-width: 0 1px 2px; color: #2e5d87; letter-spacing: -.4px; }
.dtab b { margin: 1px 4px 0; }
.dnav { display: flex; align-items: center; gap: 9px; padding: 0 5px 5px 0; }

/* status bar */
.status { flex: none; height: 38px; display: flex; align-items: center; background: #2e5d87; color: #fff; padding-top: 1px; }
.status > span { height: 30px; display: flex; align-items: center; border-right: 1px solid #6c8ba8; }
.status .msg { width: 1474px; padding-left: 11px; }
.s1 { width: 204px; } .status .s2 { width: 43px; padding-left: 7px; gap: 7px; } .s3 { width: 204px; }
.status .s4 { width: 307px; justify-content: center; border: 0; padding-left: 0; }
.status .s4 span { margin-left: -4px; }
.status .s5 { border: 0; }
.s5 svg { margin-right: 11px; }
.s5 svg:nth-of-type(1) { margin-right: 10px; } .s5 svg:nth-of-type(3) { margin-right: 8px; }
.s5 svg:nth-of-type(5) { margin-right: 7px; }
.s5 svg:nth-of-type(4) { margin-right: 10px; } .s5 svg:nth-of-type(6) { margin-right: 5px; }
.s5 svg:nth-of-type(7) { margin-right: 4px; }
.s5 svg:nth-of-type(8) { margin-right: 10px; }
.s5 svg:nth-of-type(9) { margin-right: 9px; }
.s5 svg:nth-of-type(10) { margin-right: 7px; }
.s5 svg:nth-of-type(12) { margin-right: 10px; }
.s5 i { width: 1px; height: 30px; margin-right: 4px; background: #6c8ba8; }

/* remote taskbar */
.taskbar { flex: none; height: 50px; display: flex; border-left: 1px solid #1c2a3a; border-bottom: 2px solid #43404a; background: linear-gradient(90deg, #060c12 0, #060d14 58%, #041c35 70%, #042137 78%, #032c3e 84%, #0b3036 86%, #071a27 92%, #050f1a 100%); color: #fff; }
.run { width: 58px; margin-left: -3px; background: #35393e; border-bottom: 3px solid #76b9ed; }
.run text { font: bold 11px "Open Sans", sans-serif; fill: #fff; }
.tray { margin-left: auto; display: flex; align-items: center; padding-right: 28px; gap: 11px; font-family: "Noto Sans", sans-serif; font-size: 13.4px; }
.clock { width: 66px; display: flex; flex-direction: column; align-items: center; line-height: 22px; letter-spacing: -.2px; margin: -3px 9px 0 2px; }
```
